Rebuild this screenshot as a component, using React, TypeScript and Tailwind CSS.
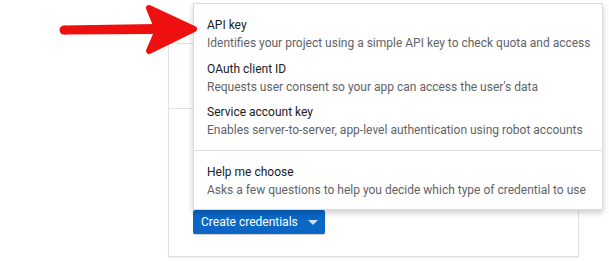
const items = [
  {
    title: "API key",
    desc: "Identifies your project using a simple API key to check quota and access",
  },
  {
    title: "OAuth client ID",
    desc: "Requests user consent so your app can access the user's data",
  },
  {
    title: "Service account key",
    desc: "Enables server-to-server, app-level authentication using robot accounts",
  },
];

function MenuItem({ title, desc }: { title: string; desc: string }) {
  return (
    <div className="whitespace-nowrap pb-[3.5px] pl-[13px] pr-4 pt-[4px]">
      <div className="text-[12px] leading-[18px] text-[#202124]">{title}</div>
      <div className="text-[12px] leading-[18px] text-[#5f6368]">{desc}</div>
    </div>
  );
}

export default function App() {
  return (
    <div
      className="relative h-[261px] w-[609px] overflow-hidden bg-white"
      style={{ fontFamily: "Roboto, 'Liberation Sans', sans-serif" }}
    >
      {/* background card */}
      <div className="ml-[168px] mt-[43px] flex h-[214px] w-[411px] flex-col border border-[#e0e0e0] shadow-[0_1px_1px_rgba(0,0,0,0.06)]">
        <div className="h-[65px] border-b border-[#e0e0e0]" />
        <div className="pl-[24px] pt-[101px]">
          <button className="flex h-[24px] w-[132px] items-center rounded-[2px] bg-[#0b66c6] pl-[8px] text-[12px] text-white shadow-[0_1px_1px_rgba(0,0,0,0.2)]">
            Create credentials
            <svg width="10" height="5" viewBox="0 0 10 5" className="ml-[10px]">
              <path d="M0 0 L10 0 L5 5 Z" fill="#cfe0f5" />
            </svg>
          </button>
        </div>
      </div>

      {/* dropdown menu */}
      <div className="absolute left-[193px] top-[3px] w-[410px] border border-[#dadce0] bg-white pb-[7px] pt-[8px] shadow-[0_3px_6px_rgba(0,0,0,0.2)]">
        {items.map((it) => (
          <MenuItem key={it.title} title={it.title} desc={it.desc} />
        ))}
        <div className="my-[7.5px] border-t border-[#e0e0e0]" />
        <MenuItem
          title="Help me choose"
          desc="Asks a few questions to help you decide which type of credential to use"
        />
      </div>

      {/* annotation arrow */}
      <svg
        className="absolute left-0 top-0"
        width="200"
        height="60"
        viewBox="0 0 200 60"
      >
        <path d="M64 25.5 L156 24 L156 34 L64 34.5 Z" fill="#ee0f0f" />
        <circle cx="64" cy="30" r="4.5" fill="#ee0f0f" />
        <polygon
          points="149,8 194,29 149,51 158,30"
          fill="#ee0f0f"
          stroke="#ee0f0f"
          strokeWidth="6"
          strokeLinejoin="round"
        />
      </svg>
    </div>
  );
}
